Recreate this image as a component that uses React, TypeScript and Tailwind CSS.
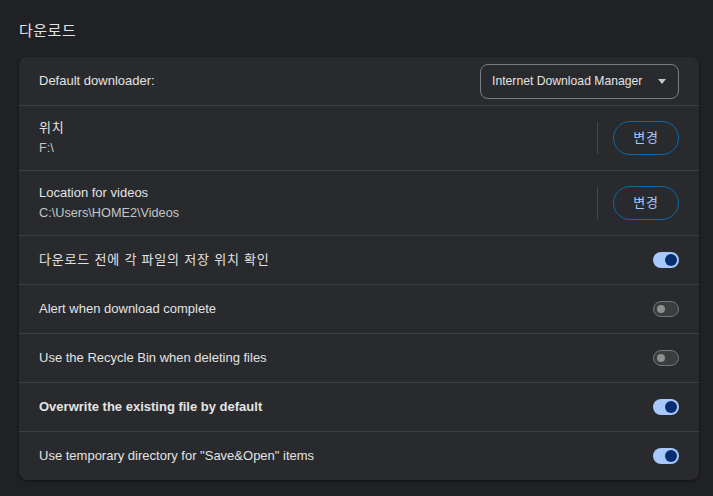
import React from "react";

type ToggleProps = { on: boolean };

function Toggle({ on }: ToggleProps) {
  if (on) {
    return (
      <div className="flex h-[16px] w-[26px] items-center justify-end rounded-full bg-[#a8c7fa] pr-[2px]">
        <div className="h-[12px] w-[12px] rounded-full bg-[#062e6f]" />
      </div>
    );
  }
  return (
    <div className="flex h-[16px] w-[26px] items-center rounded-full border border-[#747775] bg-[#3c3d3f] pl-[3px]">
      <div className="h-[8px] w-[8px] rounded-full bg-[#8e918f]" />
    </div>
  );
}

function ChangeButton() {
  return (
    <div className="flex items-center">
      <div className="mr-[15px] h-[32px] w-px bg-[#47494c]" />
      <button className="flex h-[34px] w-[66px] items-center justify-center rounded-full border border-[#0a6aa8] text-[13px] tracking-[0.8px] text-[#a8c7fa]">
        변경
      </button>
    </div>
  );
}

const toggles: { label: string; on: boolean; bold?: boolean; ko?: boolean }[] = [
  { label: "다운로드 전에 각 파일의 저장 위치 확인", on: true, ko: true },
  { label: "Alert when download complete", on: false },
  { label: "Use the Recycle Bin when deleting files", on: false },
  { label: "Overwrite the existing file by default", on: true, bold: true },
  { label: 'Use temporary directory for "Save&Open" items', on: true },
];

export default function App() {
  return (
    <div
      className="min-h-[496px] bg-[#202124] px-[19px] pt-[20px] text-[#e3e3e3]"
      style={{ fontFamily: '"Liberation Sans", "Noto Sans CJK KR", sans-serif' }}
    >
      <h2 className="mb-[15px] text-[15px] leading-[22px] tracking-[0.5px] text-[#e3e3e3]">다운로드</h2>

      <div className="w-[680px] overflow-hidden rounded-[8px] bg-[#292a2d] shadow-[0_1px_3px_rgba(0,0,0,0.5)]">
        <div className="flex h-[48px] items-center justify-between pl-[20px] pr-[20px]">
          <span className="text-[13px]">Default downloader:</span>
          <div className="flex h-[35px] w-[199px] items-center justify-between rounded-[8px] border border-[#797c80] pl-[11px] pr-[12px]">
            <span className="text-[12.2px]">Internet Download Manager</span>
            <svg width="8" height="5" viewBox="0 0 8 5">
              <path d="M0 0h8L4 5z" fill="#c4c7c5" />
            </svg>
          </div>
        </div>

        <div className="flex h-[65px] items-center justify-between border-t border-[#3f4042] pl-[20px] pr-[20px]">
          <div className="flex flex-col">
            <span className="text-[13px] leading-[20px] tracking-[0.8px]">위치</span>
            <span className="text-[12.7px] leading-[20px] text-[#c4c7c5]">F:\</span>
          </div>
          <ChangeButton />
        </div>

        <div className="flex h-[65px] items-center justify-between border-t border-[#3f4042] pl-[20px] pr-[20px]">
          <div className="flex flex-col">
            <span className="text-[13px] leading-[20px]">Location for videos</span>
            <span className="text-[12.7px] leading-[20px] text-[#c4c7c5]">C:\Users\HOME2\Videos</span>
          </div>
          <ChangeButton />
        </div>

        {toggles.map((t) => (
          <div
            key={t.label}
            className="flex h-[49px] items-center justify-between border-t border-[#3f4042] pl-[20px] pr-[20px]"
          >
            <span
              className={
                t.bold
                  ? "text-[13px] font-bold"
                  : t.ko
                    ? "text-[13px] tracking-[0.8px]"
                    : "text-[13px]"
              }
            >
              {t.label}
            </span>
            <Toggle on={t.on} />
          </div>
        ))}
      </div>
    </div>
  );
}
